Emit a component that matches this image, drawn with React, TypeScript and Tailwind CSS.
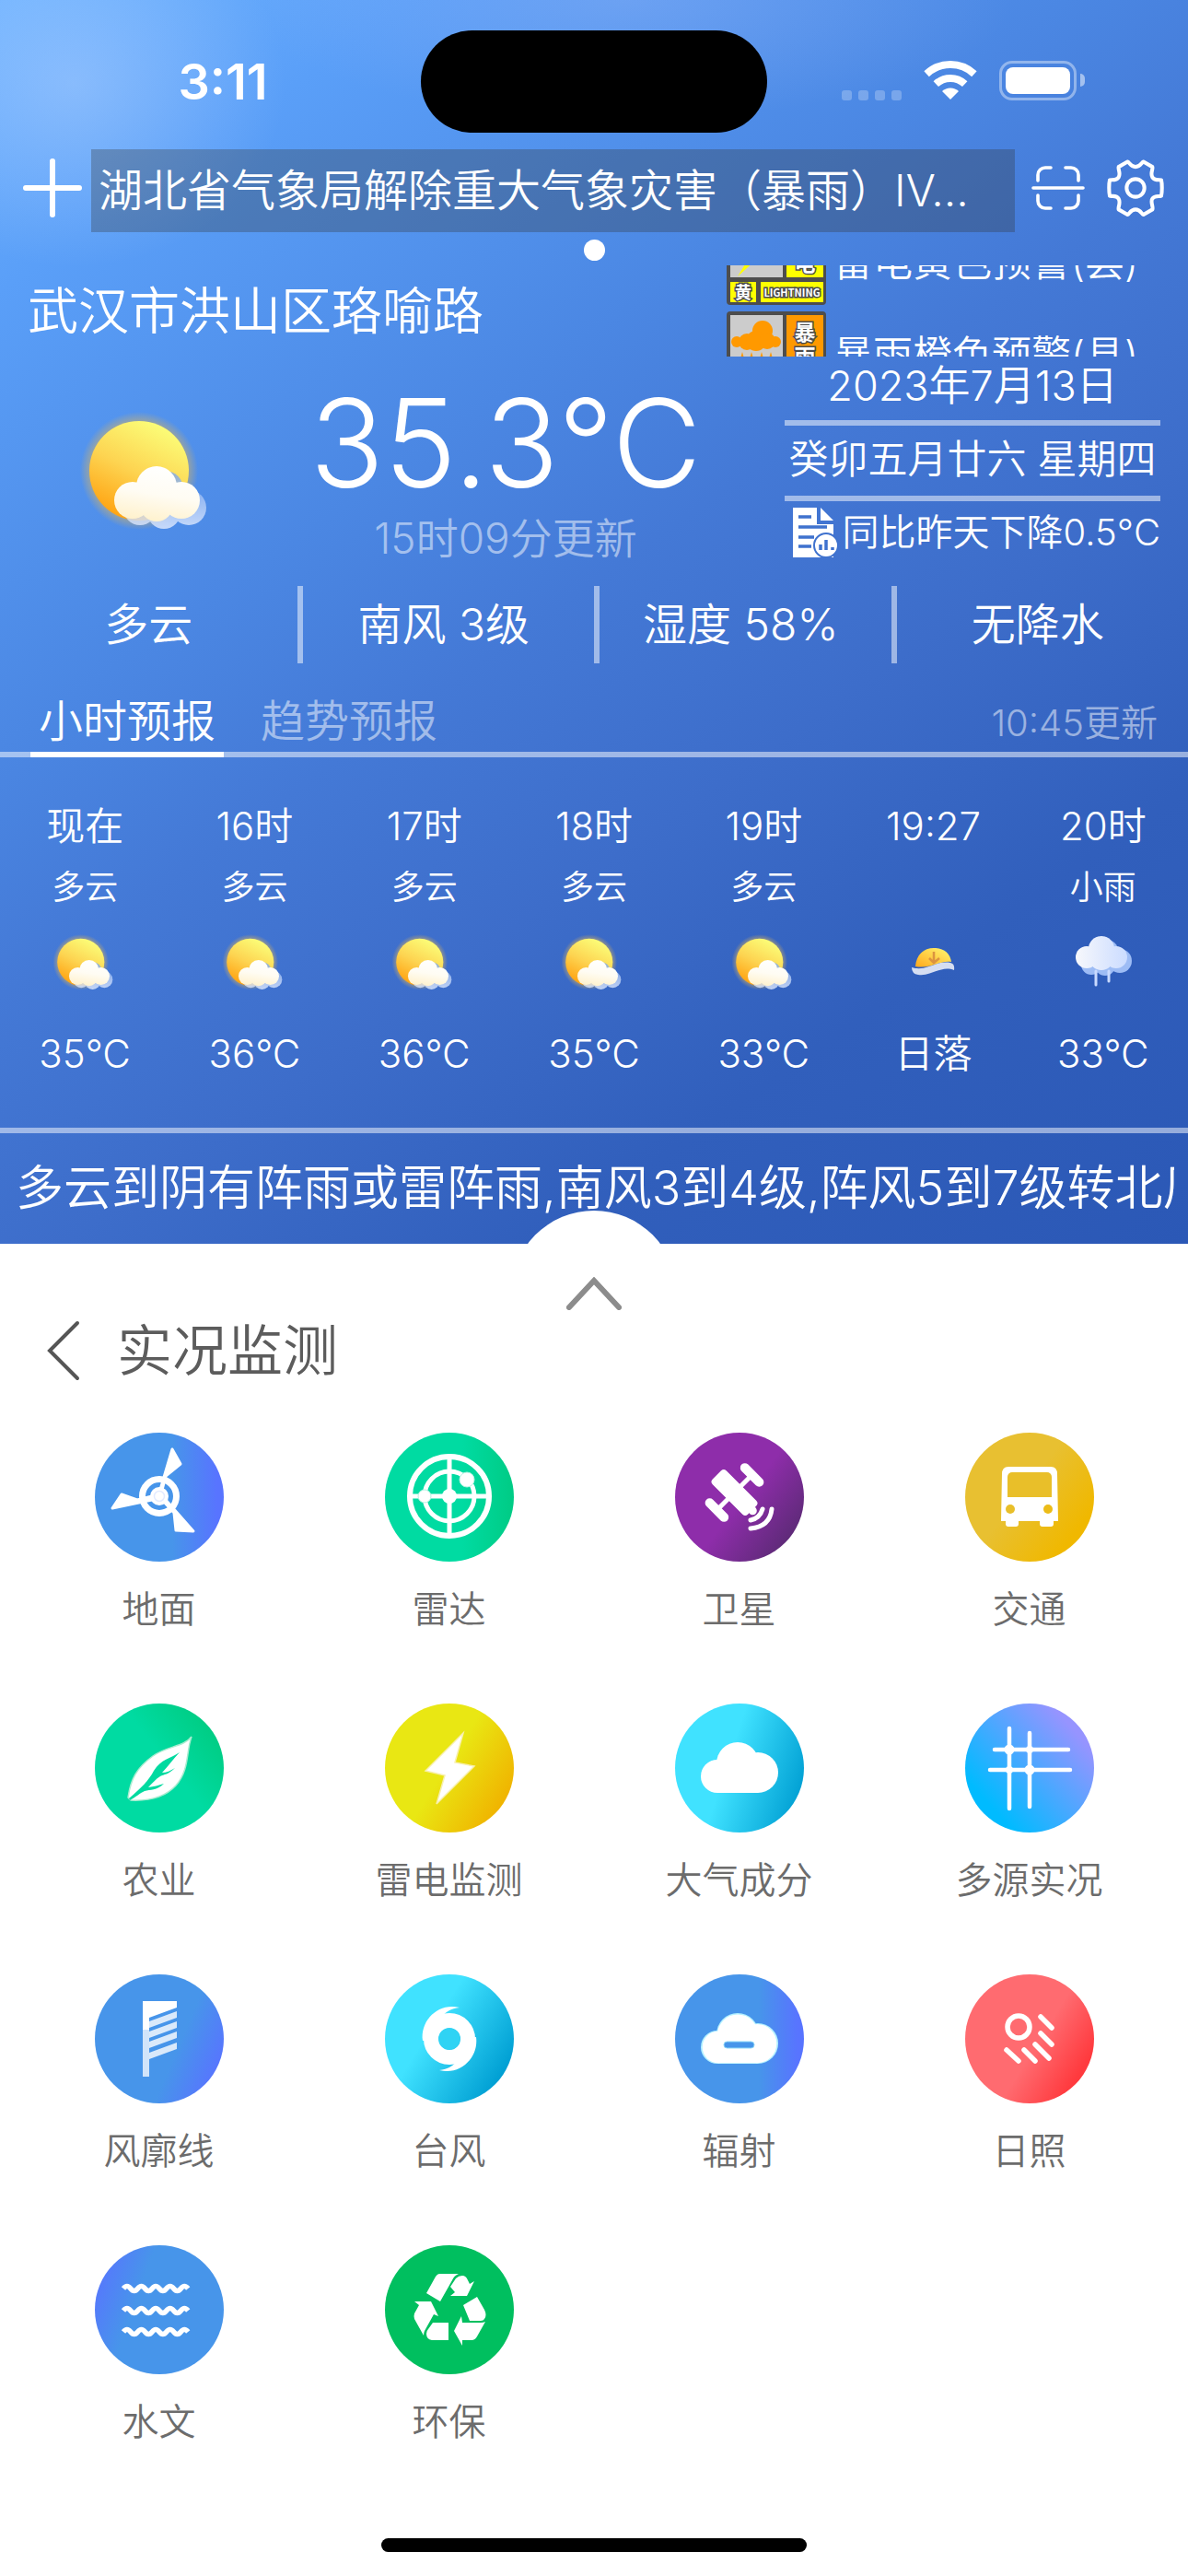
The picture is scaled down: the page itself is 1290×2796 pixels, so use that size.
import { useState, type ReactNode } from "react";
import clsx from "clsx";

interface HourItem {
  time: string;
  weather: string;
  icon: "cloudy" | "sunset" | "rain";
  value: string;
}

interface MenuItem {
  label: string;
  bg: string;
  icon: ReactNode;
}

const hours: HourItem[] = [
  { time: "现在", weather: "多云", icon: "cloudy", value: "35°C" },
  { time: "16时", weather: "多云", icon: "cloudy", value: "36°C" },
  { time: "17时", weather: "多云", icon: "cloudy", value: "36°C" },
  { time: "18时", weather: "多云", icon: "cloudy", value: "35°C" },
  { time: "19时", weather: "多云", icon: "cloudy", value: "33°C" },
  { time: "19:27", weather: "", icon: "sunset", value: "日落" },
  { time: "20时", weather: "小雨", icon: "rain", value: "33°C" },
];

const stats = ["多云", "南风 3级", "湿度 58%", "无降水"];
const tabs = ["小时预报", "趋势预报"];

/* ---------- weather icons ---------- */

function PartlyCloudy({ className }: { className: string }) {
  return (
    <svg viewBox="0 0 150 150" className={className} aria-hidden="true">
      <defs>
        <linearGradient id="sun" x1="0.7" y1="0" x2="0.2" y2="1">
          <stop offset="0" stopColor="#fbff7a" />
          <stop offset="0.5" stopColor="#fdd451" />
          <stop offset="1" stopColor="#ff9d0a" />
        </linearGradient>
        <radialGradient id="glow">
          <stop offset="0.78" stopColor="#e8b850" stopOpacity="0.6" />
          <stop offset="1" stopColor="#e8b850" stopOpacity="0" />
        </radialGradient>
        <linearGradient id="puff" gradientUnits="userSpaceOnUse" x1="85" y1="58" x2="75" y2="120">
          <stop offset="0" stopColor="#ffffff" />
          <stop offset="0.5" stopColor="#fffcf3" />
          <stop offset="1" stopColor="#fff1cb" />
        </linearGradient>
        <linearGradient id="shade" gradientUnits="userSpaceOnUse" x1="85" y1="70" x2="85" y2="126">
          <stop offset="0" stopColor="#7fa9ef" />
          <stop offset="1" stopColor="#e3ecff" />
        </linearGradient>
      </defs>
      <circle cx="65" cy="64" r="64" fill="url(#glow)" />
      <circle cx="65" cy="64" r="54" fill="url(#sun)" />
      <g fill="url(#shade)" opacity="0.8">
        <circle cx="66" cy="105" r="18" />
        <circle cx="93" cy="84" r="20" />
        <circle cx="119" cy="104" r="19" />
        <circle cx="92" cy="109" r="18" />
      </g>
      <g fill="url(#puff)">
        <circle cx="58" cy="96" r="20" />
        <circle cx="84" cy="81" r="22" />
        <circle cx="111" cy="96" r="20" />
        <circle cx="84" cy="101" r="18" />
      </g>
    </svg>
  );
}

function Sunset({ className }: { className: string }) {
  return (
    <svg viewBox="0 0 71 71" className={className} aria-hidden="true">
      <defs>
        <linearGradient id="dusk" x1="1" y1="0" x2="0" y2="1">
          <stop offset="0" stopColor="#fff873" />
          <stop offset="1" stopColor="#ffa91c" />
        </linearGradient>
      </defs>
      <path d="M16 35C17 22 25 15 36 15S54 21 55 30C43 28 32 38 16 35Z" fill="url(#dusk)" />
      <path d="M36 19V31M31 26L36 31L42 26" fill="none" stroke="#dc9440" strokeWidth="2.5" />
      <path d="M12 36C28 41 38 28 54 31Q59 32 58 39C44 33 34 46 19 44Q12 43 12 36Z" fill="#d5def2" />
    </svg>
  );
}

function LightRain({ className }: { className: string }) {
  return (
    <svg viewBox="0 0 71 71" className={className} aria-hidden="true">
      <defs>
        <linearGradient id="rain-cloud" gradientUnits="userSpaceOnUse" x1="6" y1="0" x2="62" y2="0">
          <stop offset="0" stopColor="#f7f8fc" />
          <stop offset="1" stopColor="#cbdcff" />
        </linearGradient>
      </defs>
      <g fill="#9dbcf5">
        <circle cx="23" cy="33" r="11" />
        <circle cx="38" cy="34" r="11" />
        <circle cx="54" cy="29" r="13" />
        <circle cx="40" cy="18" r="12" />
      </g>
      <path d="M28 40V55M42 40V51" stroke="#c9daff" strokeWidth="3" strokeLinecap="round" />
      <g fill="url(#rain-cloud)">
        <circle cx="18" cy="25" r="12" />
        <circle cx="34" cy="16" r="14" />
        <circle cx="50" cy="25" r="12" />
        <circle cx="34" cy="26" r="13" />
      </g>
    </svg>
  );
}

function HourIcon({ name }: { name: HourItem["icon"] }) {
  if (name === "sunset") return <Sunset className="size-[71px]" />;
  if (name === "rain") return <LightRain className="size-[71px]" />;
  return <PartlyCloudy className="size-[71px]" />;
}

/* ---------- warning signs ---------- */

interface WarningSignProps {
  color: string;
  name: string;
  level: string;
  english: string;
  children: ReactNode;
}

function WarningSign({ color, name, level, english, children }: WarningSignProps) {
  return (
    <svg viewBox="0 0 108 94" className="h-[94px] w-[108px] shrink-0" aria-hidden="true">
      <rect width="108" height="94" rx="4" fill="#4d4d4d" />
      <rect x="4" y="4" width="57" height="60" fill="#cccccc" />
      <rect x="65" y="4" width="40" height="60" fill={color} />
      <rect x="4" y="69" width="28" height="22" fill={color} />
      <rect x="37" y="69" width="68" height="22" fill={color} />
      {children}
      <g
        fill="#fff"
        stroke="#4d4d4d"
        strokeWidth="3"
        paintOrder="stroke"
        textAnchor="middle"
        fontWeight="700"
        className="font-['Noto_Sans_CJK_SC',sans-serif]"
      >
        <text x="85" y="31" fontSize="23">{name[0]}</text>
        <text x="85" y="57" fontSize="23">{name[1]}</text>
        <text x="18" y="87" fontSize="18">{level}</text>
        <text x="71" y="85" fontSize="11">{english}</text>
      </g>
    </svg>
  );
}

/* ---------- menu icons ---------- */

const cloudShape = (
  <g>
    <circle cx="46" cy="79" r="18" />
    <circle cx="68" cy="65" r="23" />
    <circle cx="90" cy="75" r="22" />
    <rect x="46" y="70" width="44" height="27" />
  </g>
);

const wave = "q3.9-5 7.8 0t7.8 0 7.8 0 7.8 0 7.8 0 7.8 0 7.8 0 7.8 0 7.8 0";

const menu: MenuItem[] = [
  {
    label: "地面",
    bg: "bg-[linear-gradient(90deg,#4795ea_60%,#5874ff_95%)]",
    icon: (
      <g fill="#fff" stroke="#fff" strokeLinejoin="round">
        <circle cx="70" cy="69" r="18.5" fill="none" strokeWidth="7" />
        <path d="M84 18L93 34L77 47L73 62L71 62Z" strokeWidth="3" />
        <path d="M19 82L29 67L46 73L62 69V73Z" strokeWidth="3" />
        <path d="M107 107L88 106L86 87L74 74L77 73Z" strokeWidth="3" />
        <circle cx="70" cy="69" r="9" strokeWidth="2" />
        <circle cx="70" cy="69" r="5.5" fill="none" stroke="#e3ebff" strokeWidth="1.5" />
      </g>
    ),
  },
  {
    label: "雷达",
    bg: "bg-[linear-gradient(90deg,#00dba2_60%,#00cc86_98%)]",
    icon: (
      <g fill="#fff" stroke="#fff">
        <circle cx="70" cy="69" r="43" fill="none" strokeWidth="6" />
        <circle cx="70" cy="69" r="27" fill="none" strokeWidth="5" />
        <path d="M70 27V111M28 69H112" strokeWidth="5" />
        <circle cx="70" cy="69" r="8" stroke="none" />
        <circle cx="43" cy="69" r="7" stroke="#b6f3e2" strokeWidth="1" />
        <circle cx="89" cy="51" r="8" stroke="#b6f3e2" strokeWidth="1" />
      </g>
    ),
  },
  {
    label: "卫星",
    bg: "bg-[linear-gradient(128deg,#8e2daa_52%,#5c2a76_88%)]",
    icon: (
      <>
        <g fill="#fff" transform="translate(64.5 65) rotate(45)">
          <rect x="-27" y="-10.5" width="54" height="21" rx="4" />
          <rect x="-16" y="-32" width="32" height="10" rx="5" />
          <rect x="-16" y="22" width="32" height="10" rx="5" />
          <rect x="-2.5" y="-24" width="5" height="48" />
          <circle cx="28" cy="0" r="4.5" />
        </g>
        <g fill="none" stroke="#fff" strokeWidth="5" strokeLinecap="round">
          <path d="M95 83Q92 93 82 95" />
          <path d="M105 83Q103 102 82 104" />
        </g>
      </>
    ),
  },
  {
    label: "交通",
    bg: "bg-[linear-gradient(128deg,#e8c031_45%,#f0b800_82%)]",
    icon: (
      <g>
        <path
          d="M47 37H93Q100 37 100 45L101 96H96V99Q96 102 93 102H84Q81 102 81 99V96H58V99Q58 102 55 102H47Q44 102 44 99V96H39L40 45Q40 37 47 37Z"
          fill="#fff"
        />
        <rect x="46" y="43" width="48" height="27" rx="5" fill="#e9bf29" />
        <rect x="46" y="58" width="48" height="12" fill="#e9bf29" />
        <circle cx="49" cy="83" r="5" fill="#e9bf29" />
        <circle cx="90" cy="83" r="5" fill="#ecbc18" />
      </g>
    ),
  },
  {
    label: "农业",
    bg: "bg-[linear-gradient(52deg,#00dba2_55%,#00cc82_88%)]",
    icon: (
      <g>
        <path
          d="M105 36C97 47 78 46 63 57C45 70 39 82 36 102L39 105C60 106 77 101 88 89C103 72 99 52 105 36Z"
          fill="#fff"
          stroke="#a9ecd0"
          strokeWidth="1.5"
        />
        <path
          d="M37 103C50 92 59 83 64 73C72 60 82 60 92 53C85 60 80 68 73 75C78 75 82 73 87 70C80 77 75 77 71 79C66 82 62 87 58 91C64 90 69 89 75 87C67 95 60 93 54 95C49 97 44 102 38 105Z"
          fill="#00daa0"
        />
      </g>
    ),
  },
  {
    label: "雷电监测",
    bg: "bg-[linear-gradient(122deg,#e9e713_48%,#f0b400_86%)]",
    icon: (
      <path
        d="M85 32L76 64L97 68L56 109L65 78L44 73Z"
        fill="#fff"
        stroke="#f8f0b0"
        strokeWidth="1.5"
      />
    ),
  },
  {
    label: "大气成分",
    bg: "bg-[linear-gradient(108deg,#40e2ff_42%,#009fd3_92%)]",
    icon: <g fill="#fff">{cloudShape}</g>,
  },
  {
    label: "多源实况",
    bg: "bg-[linear-gradient(48deg,#00bbff_20%,#9694ff_82%)]",
    icon: (
      <g fill="#fff" stroke="#fff" strokeWidth="4.5" strokeLinecap="round">
        <path d="M48 27V114M70 32V112M32 50H112M27 72H114" />
        <g stroke="none">
          <circle cx="48" cy="50" r="5.5" />
          <circle cx="70" cy="72" r="5.5" />
          <circle cx="70" cy="50" r="4" />
          <circle cx="48" cy="72" r="4" />
        </g>
      </g>
    ),
  },
  {
    label: "风廓线",
    bg: "bg-[linear-gradient(113deg,#4795ea_62%,#5874ff_90%)]",
    icon: (
      <g fill="#fff">
        <path d="M52 29H89V36L59 47V60H52Z" />
        <rect x="52" y="58" width="7" height="53" opacity="0.75" />
        <g opacity="0.8">
          <path d="M59 51L89 40V47L59 58Z" />
          <path d="M59 62L89 51V58L59 69Z" />
          <path d="M59 73L89 62V69L59 80Z" />
          <path d="M59 85L89 74V81L59 92Z" />
        </g>
      </g>
    ),
  },
  {
    label: "台风",
    bg: "bg-[linear-gradient(122deg,#40e2ff_38%,#009fd3_86%)]",
    icon: (
      <g>
        <circle cx="70" cy="70" r="20" fill="none" stroke="#fff" strokeWidth="16" />
        <path d="M41 72C38 50 58 30 81 36C72 37 65 41 62 46L54 70Z" fill="#fff" />
        <path d="M41 72C38 50 58 30 81 36C72 37 65 41 62 46L54 70Z" fill="#fff" transform="rotate(180 70 70)" />
        <circle cx="70" cy="70" r="11.5" fill="#2fd3f4" />
      </g>
    ),
  },
  {
    label: "辐射",
    bg: "bg-[linear-gradient(90deg,#4795ea_65%,#5874ff_95%)]",
    icon: (
      <g>
        <g fill="#b4f1ff">{cloudShape}</g>
        <g fill="#fff" transform="translate(2.8 3.1) scale(.96)">{cloudShape}</g>
        <rect x="53" y="73" width="33" height="7" rx="3.5" fill="#4795ea" stroke="#8fd9f8" />
      </g>
    ),
  },
  {
    label: "日照",
    bg: "bg-[linear-gradient(122deg,#ff6b70_55%,#ff3a3e_84%)]",
    icon: (
      <g fill="none" stroke="#fff" strokeWidth="5.5" strokeLinecap="round">
        <circle cx="58" cy="57" r="12" />
        <path d="M82 46L94 58M82 64L94 76M76 76L91 91M64 82L76 94M45 82L58 94" />
      </g>
    ),
  },
  {
    label: "水文",
    bg: "bg-[linear-gradient(290deg,#4795ea_65%,#5874ff_95%)]",
    icon: (
      <g fill="none" stroke="#fff" strokeWidth="5.5">
        <path d={`M31 47${wave}`} />
        <path d={`M31 71${wave}`} />
        <path d={`M31 94${wave}`} />
      </g>
    ),
  },
  {
    label: "环保",
    bg: "bg-[#00bf5f]",
    icon: (
      <g fill="#fff">
        <path d="M59 31H80Q75 33 73 38L60 61L45 52L55 34Q57 31 59 31Z" />
        <path d="M77 36Q80 33 84 33Q88 33 90 38L92 42L97 39L89 55H71L76 51L71 45Z" />
        <path d="M100 56L108 70Q111 76 108 80Q107 82 104 82H92L85 65Z" />
        <path d="M109 83L100 99Q98 103 94 103H84V109L75 93L83 77L84 84H104Q107 84 109 83Z" />
        <path d="M52 84H69V103H51Q45 102 45 96Q45 93 47 91Z" />
        <path d="M32 61H50L58 77L53 75L43 93Q42 95 42 98L32 80Q31 77 32 74L37 65Z" />
      </g>
    ),
  },
];

/* ---------- sections ---------- */

function StatusBar() {
  return (
    <div className="grid h-[162px] grid-cols-[1fr_376px_1fr] pt-[33px]">
      <div className="flex h-[111px] items-center justify-center pl-[27px] text-[54px] font-semibold">3:11</div>
      <div className="h-[111px] rounded-full bg-black" />
      <div className="flex h-[108px] items-center justify-center pr-[32px]">
        <div className="mt-8 mr-6 flex gap-[7px]">
          <span className="size-[11px] rounded-[3px] bg-white/25" />
          <span className="size-[11px] rounded-[3px] bg-white/25" />
          <span className="size-[11px] rounded-[3px] bg-white/25" />
          <span className="size-[11px] rounded-[3px] bg-white/25" />
        </div>
        <svg viewBox="0 0 58 42" className="mr-6 h-[42px] w-[58px]" aria-hidden="true">
          <path d="M3.1 14.2A38 38 0 0 1 54.9 14.2" fill="none" stroke="#fff" strokeWidth="8" />
          <path d="M13.3 25.2A23 23 0 0 1 44.7 25.2" fill="none" stroke="#fff" strokeWidth="8" />
          <path d="M29 42L20 33A13 13 0 0 1 38 33Z" fill="#fff" />
        </svg>
        <div className="flex h-[43px] w-[84px] rounded-[14px] border-[3px] border-white/40 p-1">
          <div className="flex-1 rounded-[8px] bg-white" />
        </div>
        <div className="ml-1 h-[14px] w-[5px] rounded-r-full bg-white/50" />
      </div>
    </div>
  );
}

function NoticeBar() {
  return (
    <div className="flex h-[90px] items-stretch">
      <button type="button" aria-label="添加城市" className="flex w-[99px] items-center pb-[6px] pl-[25px]">
        <svg viewBox="0 0 64 64" className="size-[64px]">
          <path d="M32 3V61M3 32H61" stroke="#fff" strokeWidth="6" strokeLinecap="round" />
        </svg>
      </button>
      <a href="#notice" className="min-w-0 flex-1 truncate bg-[#333]/30 pr-8 pl-2 text-[48px] leading-[90px]">
        湖北省气象局解除重大气象灾害（暴雨）Ⅳ...
      </a>
      <button type="button" aria-label="扫一扫" className="ml-[18px] flex items-center pb-[6px]">
        <svg viewBox="0 0 58 48" className="h-[48px] w-[58px]">
          <g fill="none" stroke="#fff" strokeWidth="3.6" strokeLinecap="round">
            <path d="M7 16V10A8 8 0 0 1 15 2H21M37 2H43A8 8 0 0 1 51 10V16" />
            <path d="M7 32V38A8 8 0 0 0 15 46H21M37 46H43A8 8 0 0 0 51 38V32" />
            <path d="M2 24H56" />
          </g>
        </svg>
      </button>
      <button type="button" aria-label="设置" className="mr-[26px] ml-6 flex items-center pb-[6px]">
        <svg viewBox="0 0 61 61" className="size-[62px]">
          <g fill="none" stroke="#fff" strokeWidth="4" strokeLinejoin="round">
            <path d="M22 2.5C24 3 25 8 30.5 8S37 3 39 2.5L48.5 8C49.5 10 46 15 48.5 19S56 21.5 58 22C59 26 59 35 58 39C55.5 40 51 38.5 48.5 42S50 51 48.5 53.5L39 59C37 58.5 36 53.5 30.5 53.5S24 58.5 22 59L12.5 53.5C11.5 51 15 46.5 12.5 42S5 40 3 39C2 35 2 26 3 22C5 21.5 10 23 12.5 19S11.5 10 12.5 8Z" />
            <circle cx="30.5" cy="30.5" r="9.5" />
          </g>
        </svg>
      </button>
    </div>
  );
}

function Warnings() {
  return (
    <div className="h-[99px] w-[501px] overflow-hidden text-[43px]">
      {/* ticker is halfway between two warnings */}
      <ul className="-mt-[51px] flex flex-col gap-[7px]">
        <li className="flex items-center gap-2 whitespace-nowrap">
          <WarningSign color="#ffff00" name="雷电" level="黄" english="LIGHTNING">
            <path d="M34 10L14 40H26L12 63L42 36H31L46 10Z" fill="#ffff00" />
          </WarningSign>
          雷电黄色预警(县)
        </li>
        <li className="flex items-center gap-2 whitespace-nowrap">
          <WarningSign color="#ff9900" name="暴雨" level="橙" english="RAIN">
            <g fill="#ff9900">
              <circle cx="11" cy="33" r="6" />
              <circle cx="22" cy="33" r="9" />
              <circle cx="39" cy="21" r="11" />
              <circle cx="32" cy="32" r="11" />
              <circle cx="44" cy="32" r="9" />
              <circle cx="53" cy="33" r="6" />
              <path d="M17 44L21 58H13ZM27 44L31 58H23ZM38 44L42 58H34ZM48 44L52 58H44Z" />
            </g>
          </WarningSign>
          暴雨橙色预警(县)
        </li>
      </ul>
    </div>
  );
}

function CurrentWeather() {
  return (
    <div className="flex">
      <PartlyCloudy className="mt-[60px] ml-[86px] size-[150px] shrink-0" />
      <div className="flex flex-1 flex-col items-center pt-[19px] pl-[10px] whitespace-nowrap">
        <div className="text-[133px] leading-[150px]">35.3°C</div>
        <div className="text-[46px] leading-[56px] text-white/50">15时09分更新</div>
      </div>
      <div className="mr-[30px] w-[408px] text-center whitespace-nowrap">
        <div className="border-b-[6px] border-white/50 pb-[6px] text-[45px] leading-[63px]">2023年7月13日</div>
        <div className="border-b-[6px] border-white/50 pb-1 text-[43px] leading-[72px]">癸卯五月廿六 星期四</div>
        <div className="flex items-center justify-end gap-1 text-[40px] leading-[68px]">
          <svg viewBox="0 0 50 54" className="h-[54px] w-[50px]" aria-hidden="true">
            <path d="M0 0H26V18H44V54H0Z" fill="#fff" />
            <path d="M30 0L44 14H30Z" fill="#fff" />
            <path d="M6 10H20M6 21H37M6 32H23M6 42H20" stroke="#3f72ce" strokeWidth="3.5" />
            <circle cx="36" cy="41" r="13" fill="#fff" stroke="#3f72ce" strokeWidth="2" />
            <path d="M30 46V40M36 46V35M43 46V43" stroke="#3f72ce" strokeWidth="3.5" />
          </svg>
          同比昨天下降0.5°C
        </div>
      </div>
    </div>
  );
}

export default function App() {
  const [activeTab, setActiveTab] = useState(tabs[0]);

  return (
    <div className="flex min-h-screen flex-col overflow-x-hidden bg-white font-['Inter','Noto_Sans_CJK_SC',sans-serif]">
      <header className="bg-[radial-gradient(ellipse_230px_200px_at_80px_90px,rgba(190,215,255,0.4),transparent),radial-gradient(ellipse_420px_130px_at_680px_0px,rgba(150,180,245,0.35),transparent),linear-gradient(145deg,#6db2ff_0%,#5a9ff8_14%,#4b87e3_36%,#4479d6_48%,#3d6dca_62%,#315fbc_78%,#2b58b6_100%)] font-[350] text-white">
        <StatusBar />
        <NoticeBar />

        {/* Carousel dot */}
        <div className="flex h-[36px] justify-center pt-2">
          <span className="size-[23px] rounded-full bg-white" />
        </div>

        <div className="flex justify-between">
          <h1 className="pl-[30px] text-[55px] leading-[99px]">武汉市洪山区珞喻路</h1>
          <Warnings />
        </div>

        <CurrentWeather />

        {/* Current stats */}
        <ul className="mt-6 grid h-[84px] grid-cols-4 text-center text-[48px] leading-[84px]">
          {stats.map((item) => (
            <li key={item} className="border-white/50 not-first:border-l-[6px] not-first:pr-[10px]">
              {item}
            </li>
          ))}
        </ul>

        {/* Forecast tabs */}
        <div className="flex items-start gap-[31px] border-b-[6px] border-white/50 px-[33px] pt-[30px]">
          {tabs.map((tab) => (
            <button
              key={tab}
              type="button"
              onClick={() => setActiveTab(tab)}
              className={clsx(
                "-mb-[6px] h-[72px] border-b-[6px] px-[9px] text-[48px] leading-[66px]",
                activeTab === tab ? "border-white" : "border-transparent text-white/50"
              )}
            >
              {tab}
            </button>
          ))}
          <span className="ml-auto pt-1 text-[40px] leading-[62px] text-white/50">10:45更新</span>
        </div>

        {/* Hourly forecast */}
        <ul className="grid grid-cols-7 border-b-[6px] border-white/50 pt-[47px] pb-[52px]">
          {hours.map((hour) => (
            <li key={hour.time} className="flex flex-col items-center">
              <span className="text-[42px] leading-[56px]">{hour.time}</span>
              <span className="mt-[14px] mb-[27px] h-[48px] text-[36px] leading-[48px]">{hour.weather}</span>
              <HourIcon name={hour.icon} />
              <span className="mt-[31px] text-[42px] leading-[56px]">{hour.value}</span>
            </li>
          ))}
        </ul>

        <div className="px-[15px]">
          <p className="overflow-hidden pl-[2px] text-[52px] leading-[120px] whitespace-nowrap">
            多云到阴有阵雨或雷阵雨,南风3到4级,阵风5到7级转北风
          </p>
        </div>
      </header>

      <main className="relative flex flex-1 flex-col pt-[71px]">
        <button
          type="button"
          aria-label="展开"
          className="absolute -top-[36px] left-1/2 flex size-[180px] -translate-x-1/2 justify-center rounded-full bg-white pt-[72px]"
        >
          <svg viewBox="0 0 60 36" className="h-[36px] w-[60px]">
            <path d="M3 33L30 4L57 33" fill="none" stroke="#8c8c8c" strokeWidth="6" strokeLinecap="round" />
          </svg>
        </button>

        <div className="flex h-[90px] items-center">
          <button type="button" aria-label="返回" className="ml-[51px]">
            <svg viewBox="0 0 36 66" className="h-[66px] w-[36px]">
              <path d="M33 3L3 33L33 63" fill="none" stroke="#555" strokeWidth="4" strokeLinecap="round" />
            </svg>
          </button>
          <h2 className="ml-10 text-[60px] font-[350] text-[#5c5c5c]">实况监测</h2>
        </div>

        <nav className="mt-[44px] grid grid-cols-4 gap-y-[74px] px-[15px]">
          {menu.map((item) => (
            <a key={item.label} href="#" className="flex flex-col items-center">
              <span className={clsx("size-[140px] rounded-full", item.bg)}>
                <svg viewBox="0 0 140 140" className="size-full" aria-hidden="true">
                  {item.icon}
                </svg>
              </span>
              <span className="mt-6 text-[40px] leading-[56px] font-[350] text-[#6c6c6c]">{item.label}</span>
            </a>
          ))}
        </nav>

        {/* Home indicator */}
        <div className="mx-auto mt-auto mb-[26px] h-[15px] w-[462px] rounded-full bg-black" />
      </main>
    </div>
  );
}
